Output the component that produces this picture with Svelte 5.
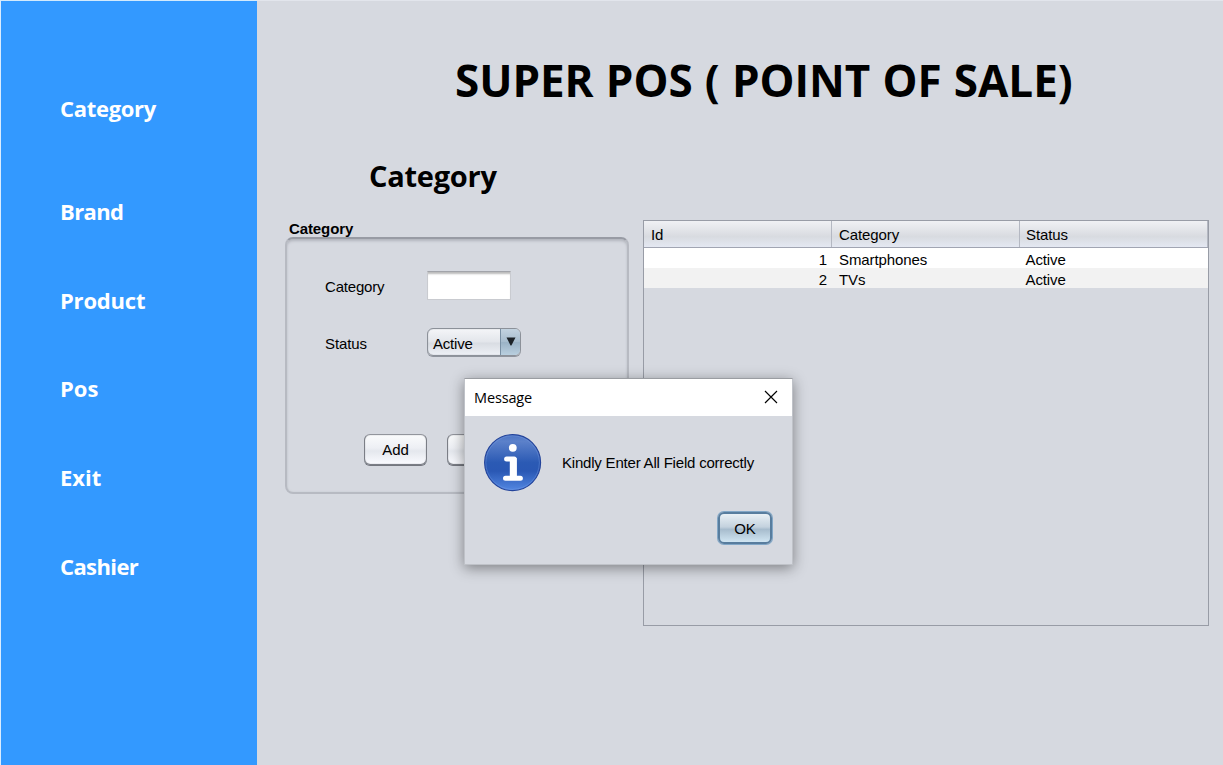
<script>
  const links = ['Category', 'Brand', 'Product', 'Pos', 'Exit', 'Cashier'];
  const rows = [
    { id: 1, category: 'Smartphones', status: 'Active' },
    { id: 2, category: 'TVs', status: 'Active' },
  ];
</script>

<div class="app">
  <nav>
    {#each links as link}<a class={link.toLowerCase()} href="#{link}"><span>{link}</span></a>{/each}
  </nav>
  <main>
    <h1><span>SUPER POS ( POINT OF SALE)</span></h1>
    <div class="content">
      <section class="left">
        <h2><span>Category</span></h2>
        <div class="legend">Category</div>
        <div class="panel">
          <div class="field"><span class="label">Category</span><input aria-label="Category" /></div>
          <div class="field status">
            <span class="label">Status</span>
            <div class="combo"><span>Active</span><i><svg width="10" height="9" viewBox="0 0 10 9"><path d="M0.5 0.5H9.5L5.4 8.5H4.6Z" fill="#1c2227" /></svg></i></div>
          </div>
          <div class="buttons"><button>Add</button><button></button></div>
        </div>
      </section>
      <section class="table">
        <div class="row head"><span>Id</span><span>Category</span><span>Status</span></div>
        {#each rows as row}
          <div class="row"><span class="num">{row.id}</span><span>{row.category}</span><span class="state">{row.status}</span></div>
        {/each}
      </section>
    </div>
  </main>
  <div class="dialog">
    <header>
      <span>Message</span>
      <svg width="14" height="14" viewBox="0 0 14 14"><path d="M1 1L13 13M13 1L1 13" stroke="#000" stroke-width="1.15" /></svg>
    </header>
    <div class="message">
      <svg width="58" height="58" viewBox="0 0 58 58">
        <defs>
          <linearGradient id="disc" x1="0" y1="0" x2="0" y2="1">
            <stop offset="0" stop-color="#4a73c4" /><stop offset=".12" stop-color="#5c81ca" />
            <stop offset=".5" stop-color="#2b5ab4" /><stop offset=".65" stop-color="#2a58b4" />
            <stop offset="1" stop-color="#5387e2" />
          </linearGradient>
        </defs>
        <circle cx="28.6" cy="28.6" r="28" fill="url(#disc)" stroke="#23439a" stroke-width="1.1" />
        <circle cx="28.6" cy="28.6" r="26.8" fill="none" stroke="#7fa2e4" stroke-opacity=".35" />
        <circle cx="28.8" cy="13.8" r="3.9" fill="#fff" />
        <path d="M22.6 25H30.2V44.3M21.5 44.3H36.4" fill="none" stroke="#fff" stroke-width="5" stroke-linecap="round" stroke-linejoin="round" />
        <path d="M25.8 24H32.7V44H25.8Z" fill="#fff" />
      </svg>
      <span>Kindly Enter All Field correctly</span>
    </div>
    <button class="ok">OK</button>
  </div>
</div>

<style>
  :global(body) { background: #d6d9e0; overflow: hidden; }
  * { box-sizing: border-box; }
  .app {
    position: relative; display: flex; width: 1223px; height: 765px;
    background: #d6d9e0; color: #000; font: 15px/20px "Liberation Sans", Arial, sans-serif; letter-spacing: -.1px;
  }
  nav {
    width: 257px; flex: none; display: flex; flex-direction: column; gap: 58.8px;
    padding: 92px 0 0 59px; background: #3399ff; border-left: 1px solid #d9ecff; border-top: 1px solid #d3eafc;
  }
  a {
    height: 30px; color: #fff; text-decoration: none; white-space: nowrap; letter-spacing: -.2px;
    font: bold 22px/30px "Open Sans", "Noto Sans", sans-serif;
  }
  a.category { margin-bottom: 14px; letter-spacing: -.3px; }
  a.brand, a.cashier { letter-spacing: -.6px; }
  a.pos, a.exit { letter-spacing: 0; }
  main { flex: 1; min-width: 0; border-top: 1px solid #e2e5ec; }
  h1, h2 { margin: 0; white-space: nowrap; font-family: "Open Sans", "Noto Sans", sans-serif; font-weight: bold; }
  h1 { height: 119px; padding: 49px 0 0 198px; font-size: 44px; line-height: 60px; letter-spacing: -.05px; word-spacing: .9px; }
  .content { display: flex; gap: 14px; padding-left: 28px; }
  .left { width: 344px; }
  h2 { height: 100px; padding: 36px 0 0 84px; font-size: 29px; line-height: 40px; letter-spacing: -.25px; }
  .legend { height: 17px; padding-left: 4px; font-weight: bold; line-height: 17px; }
  .panel {
    height: 257px; padding: 32px 0 0 38px; border: 2px solid #b7bac2; border-top-color: #989ba4; border-radius: 8px;
    box-shadow: inset 0 3px 3px -1px #b2b5bd, inset 0 0 2px #c3c6cd;
  }
  .field { display: flex; height: 29px; align-items: center; }
  .status { margin-top: 28px; }
  .label { width: 102px; padding-top: 2px; letter-spacing: -.2px; }
  .status .label { letter-spacing: -.1px; }
  input {
    width: 84px; height: 29px; padding: 0; background: #fff; border: 1px solid #c9cbd0; border-top: 1px solid #a2a4aa;
    box-shadow: inset 0 3px 2px -1px #bbb;
  }
  .combo {
    display: flex; width: 94px; height: 28px; margin-top: -1px; border: 1.5px solid #8c9199; border-radius: 6px; overflow: hidden;
    background: linear-gradient(#f4f5f8, #e3e6eb 48%, #d9dde3 55%, #edf0f5); box-shadow: 0 1px 0 #8f949d, inset 0 0 1px #8c9199;
  }
  .combo span { flex: 1; padding: 5px 0 0 5px; letter-spacing: -.2px; }
  .combo i { width: 20px; display: grid; place-items: center; border-left: 1px solid #7990a4; background: linear-gradient(#c3d3e0, #a6bccd 50%, #9bb3c6 52%, #b9cfdf); }
  .combo svg { margin-top: -2px; }
  .buttons { display: flex; gap: 20px; margin: 77px 0 0 39px; }
  button {
    width: 63px; height: 31px; padding: 1px 0 0; border: 1.5px solid #7b7e86; border-top-color: #92959c; border-radius: 6px; color: #000;
    background: linear-gradient(#fafbfc, #edeff4 45%, #e4e7ed 55%, #fafbff); font: inherit; box-shadow: 0 1px 0 #74777f, inset 0 0 1px #7b7e86;
  }
  .table { width: 566px; height: 406px; margin-top: 100px; border: 1px solid #989ca6; }
  .row { display: grid; grid-template-columns: 188px 188px 1fr; height: 20px; background: #fff; line-height: 24px; }
  .row:last-child { background: #f2f2f2; }
  .row span { padding-left: 7px; }
  .row .num { padding: 0 5px 0 0; text-align: right; }
  .row .state { padding-left: 5.5px; }
  .head { height: 27px; line-height: 28px; border-bottom: 1px solid #a1a5b2; background: linear-gradient(#f0f1f4, #dddfe4 48%, #d8dbe0 60%, #e4e8f2); }
  .row.head span { height: 26px; padding-left: 7px; border-right: 1px solid #b4b8c2; }
  .row.head span:last-child { padding-left: 6px; }
  .dialog {
    position: absolute; left: 464px; top: 378px; width: 329px; height: 187px; border: 1px solid #bfc2c8; border-top-color: #9a9da2;
    background: #d6d9e0; box-shadow: 0 3px 13px rgba(0, 0, 0, .42);
  }
  header { display: flex; justify-content: space-between; align-items: center; height: 37px; padding: 0 14px 0 9px; background: #fff; }
  header svg { margin-top: -2px; }
  header span { font: 14.5px/20px "Open Sans", "Noto Sans", sans-serif; letter-spacing: -.15px; }
  .message { display: flex; align-items: center; gap: 20px; margin: 18px 0 0 19px; height: 58px; white-space: nowrap; letter-spacing: -.2px; }
  .ok {
    display: block; width: 54px; height: 32px; padding-top: 2px; margin: 20px 0 0 253px; border: 2px solid #587d9e; border-radius: 6px;
    background: linear-gradient(#e9f0f5, #c4d2de 46%, #a7bccd 55%, #d0e5f2); box-shadow: 0 0 0 1px #82a7c7;
  }
</style>
